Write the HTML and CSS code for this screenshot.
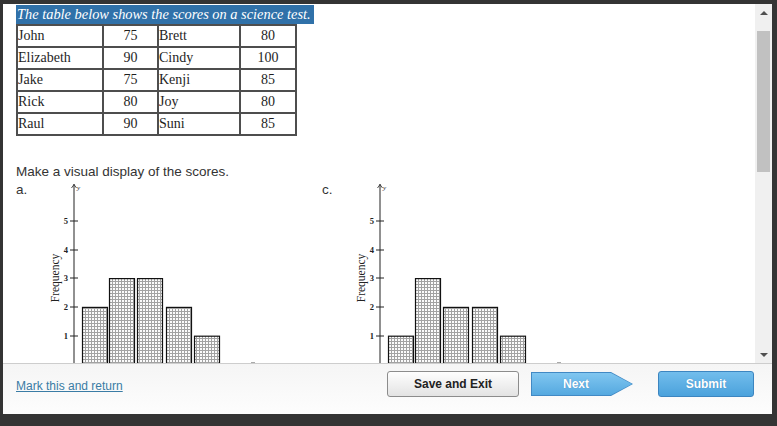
FILE: index.html
```html
<!DOCTYPE html>
<html>
<head>
<meta charset="utf-8">
<link rel="stylesheet" href="styles.css">
</head>
<body>
<div class="frame">
  <div class="main">
    <div class="content">
      <div class="caption">The table below shows the scores on a science test.</div>
      <table class="scores">
        <tr><td class="name">John</td><td class="num">75</td><td class="name">Brett</td><td class="num">80</td></tr>
        <tr><td class="name">Elizabeth</td><td class="num">90</td><td class="name">Cindy</td><td class="num">100</td></tr>
        <tr><td class="name">Jake</td><td class="num">75</td><td class="name">Kenji</td><td class="num">85</td></tr>
        <tr><td class="name">Rick</td><td class="num">80</td><td class="name">Joy</td><td class="num">80</td></tr>
        <tr><td class="name">Raul</td><td class="num">90</td><td class="name">Suni</td><td class="num">85</td></tr>
      </table>
      <p class="question">Make a visual display of the scores.</p>
      <div class="options">
        <div class="option">
          <span class="opt-label">a.</span>
          <svg class="chart" width="240" height="190" viewBox="0 0 240 190">
            <defs>
              <pattern id="gridA" width="3" height="3" patternUnits="userSpaceOnUse">
                <rect width="3" height="3" fill="#fbfbfb"/>
                <rect width="3" height="1" fill="#a2a2a2"/>
                <rect width="1" height="3" fill="#a2a2a2"/>
              </pattern>
            </defs>
            <line x1="34" y1="2" x2="34" y2="190" stroke="#222" stroke-width="1"/>
            <polyline points="31.5,6 34,2.5 36.5,6" fill="none" stroke="#222" stroke-width="0.8"/>
            <text x="37" y="8" class="ylab">y</text>
            <g stroke="#222" stroke-width="1">
              <line x1="30" y1="39" x2="38" y2="39"/>
              <line x1="30" y1="68" x2="38" y2="68"/>
              <line x1="30" y1="96" x2="38" y2="96"/>
              <line x1="30" y1="125" x2="38" y2="125"/>
              <line x1="30" y1="154" x2="38" y2="154"/>
            </g>
            <g class="tick">
              <text x="28" y="42">5</text>
              <text x="28" y="71">4</text>
              <text x="28" y="99">3</text>
              <text x="28" y="128">2</text>
              <text x="28" y="157">1</text>
            </g>
            <text class="freq" x="19" y="96" transform="rotate(-90 19 96)">Frequency</text>
            <g fill="url(#gridA)" stroke="#111" stroke-width="1.2">
              <rect x="42.5" y="125.4" width="25" height="70"/>
              <rect x="69.5" y="96.6" width="25" height="100"/>
              <rect x="97.5" y="96.6" width="25" height="100"/>
              <rect x="126.5" y="125.4" width="25" height="70"/>
              <rect x="154.5" y="154.2" width="25" height="40"/>
            </g>
            <line x1="211" y1="180.5" x2="215" y2="180.5" stroke="#aaa" stroke-width="1"/>
          </svg>
        </div>
        <div class="option">
          <span class="opt-label">c.</span>
          <svg class="chart" width="240" height="190" viewBox="0 0 240 190">
            <line x1="34" y1="2" x2="34" y2="190" stroke="#222" stroke-width="1"/>
            <polyline points="31.5,6 34,2.5 36.5,6" fill="none" stroke="#222" stroke-width="0.8"/>
            <text x="37" y="8" class="ylab">y</text>
            <g stroke="#222" stroke-width="1">
              <line x1="30" y1="39" x2="38" y2="39"/>
              <line x1="30" y1="68" x2="38" y2="68"/>
              <line x1="30" y1="96" x2="38" y2="96"/>
              <line x1="30" y1="125" x2="38" y2="125"/>
              <line x1="30" y1="154" x2="38" y2="154"/>
            </g>
            <g class="tick">
              <text x="28" y="42">5</text>
              <text x="28" y="71">4</text>
              <text x="28" y="99">3</text>
              <text x="28" y="128">2</text>
              <text x="28" y="157">1</text>
            </g>
            <text class="freq" x="19" y="96" transform="rotate(-90 19 96)">Frequency</text>
            <g fill="url(#gridA)" stroke="#111" stroke-width="1.2">
              <rect x="42.5" y="154.2" width="25" height="40"/>
              <rect x="69.5" y="96.6" width="25" height="100"/>
              <rect x="97.5" y="125.4" width="25" height="70"/>
              <rect x="126.5" y="125.4" width="25" height="70"/>
              <rect x="154.5" y="154.2" width="25" height="40"/>
            </g>
            <line x1="211" y1="180.5" x2="215" y2="180.5" stroke="#aaa" stroke-width="1"/>
          </svg>
        </div>
      </div>
    </div>
    <div class="scrollbar">
      <div class="sb-btn"><span class="arrow-up"></span></div>
      <div class="thumb"></div>
      <div class="sb-fill"></div>
      <div class="sb-btn"><span class="arrow-down"></span></div>
    </div>
  </div>
  <div class="footer">
    <a class="mark" href="#">Mark this and return</a>
    <div class="actions">
      <button class="btn save">Save and Exit</button>
      <div class="next"><div class="next-inner">Next</div></div>
      <button class="btn submit">Submit</button>
    </div>
  </div>
</div>
</body>
</html>
```
FILE: styles.css
```css
html, body {
  margin: 0;
  padding: 0;
}
body {
  background: #343434;
  font-family: "Liberation Sans", Arial, sans-serif;
  width: 777px;
  height: 426px;
  overflow: hidden;
}
.frame {
  margin: 4px 0 0 3px;
  width: 769px;
  height: 410px;
  background: #fff;
  display: flex;
  flex-direction: column;
}
.main {
  display: flex;
  height: 359px;
}
.content {
  flex: 1;
  overflow: hidden;
  padding: 1px 0 0 13px;
}
.caption {
  width: max-content;
  background: #3071a9;
  color: #fff;
  font-family: "Liberation Serif", "Times New Roman", serif;
  font-style: italic;
  font-size: 14.4px;
  line-height: 19px;
  height: 19px;
  padding: 0 3px 0 1px;
}
.scores {
  border-collapse: collapse;
  font-family: "Liberation Serif", "Times New Roman", serif;
  font-size: 14px;
  color: #1e1e1e;
}
.scores td {
  border: 2px solid #4e4e4e;
  height: 20px;
  padding: 0;
  line-height: 18px;
}
.scores td.name {
  text-align: left;
  padding-left: 0;
}
.scores tr td:nth-child(1) { width: 84px; }
.scores tr td:nth-child(2) { width: 53px; }
.scores tr td:nth-child(3) { width: 80px; }
.scores tr td:nth-child(4) { width: 54px; }
.scores td.num {
  text-align: center;
}
.question {
  margin: 28px 0 0 0;
  font-size: 13.5px;
  line-height: 16px;
  color: #333;
}
.options {
  display: flex;
  margin-top: 2px;
}
.option {
  display: flex;
  align-items: flex-start;
  width: 306px;
}
.opt-label {
  width: 24px;
  font-size: 13.5px;
  line-height: 16px;
  color: #333;
}
.chart {
  display: block;
}
.chart .ylab {
  font-family: "Liberation Serif", serif;
  font-style: italic;
  font-size: 7px;
  fill: #222;
}
.chart .tick text {
  font-family: "Liberation Serif", serif;
  font-weight: bold;
  font-size: 8.5px;
  text-anchor: end;
  fill: #222;
}
.chart .freq {
  font-family: "Liberation Serif", serif;
  font-size: 11.5px;
  text-anchor: middle;
  fill: #222;
}
.scrollbar {
  width: 17px;
  background: #f0f0f0;
  display: flex;
  flex-direction: column;
  align-items: center;
}
.sb-btn {
  width: 17px;
  height: 17px;
  display: flex;
  align-items: center;
  justify-content: center;
}
.arrow-up {
  width: 0;
  height: 0;
  border-left: 4px solid transparent;
  border-right: 4px solid transparent;
  border-bottom: 4px solid #505050;
}
.arrow-down {
  width: 0;
  height: 0;
  border-left: 4px solid transparent;
  border-right: 4px solid transparent;
  border-top: 4px solid #505050;
}
.thumb {
  width: 13px;
  height: 141px;
  margin-top: 10px;
  background: #c1c1c1;
}
.sb-fill {
  flex: 1;
}
.footer {
  height: 40px;
  border-top: 1px solid #cdcdcd;
  background: linear-gradient(#f5f5f5, #fdfdfd);
  display: flex;
  align-items: center;
  justify-content: space-between;
  padding: 0 18px 10px 13px;
}
.mark {
  color: #3a7ca5;
  font-size: 12px;
  text-decoration: underline;
  margin-top: 4px;
}
.actions {
  display: flex;
  align-items: center;
}
.btn {
  box-sizing: border-box;
  height: 26px;
  border-radius: 3px;
  font-family: "Liberation Sans", Arial, sans-serif;
  font-weight: bold;
  font-size: 12px;
  padding: 0;
}
.save {
  width: 132px;
  margin-right: 12px;
  border: 1px solid #8c8c8c;
  background: linear-gradient(#fefefe, #e3e3e3);
  color: #222;
}
.next {
  width: 102px;
  height: 24px;
  box-sizing: border-box;
  padding: 1px;
  margin-right: 25px;
  background: #4189c4;
  clip-path: polygon(0 0, 80px 0, 102px 12px, 80px 24px, 0 24px);
}
.next-inner {
  width: 100px;
  height: 22px;
  background: linear-gradient(#80c6f0, #55a9e0);
  clip-path: polygon(0 0, 79px 0, 100px 11px, 79px 22px, 0 22px);
  color: #fff;
  font-weight: bold;
  font-size: 12px;
  line-height: 22px;
  padding-right: 12px;
  box-sizing: border-box;
  text-align: center;
  text-shadow: 0 0 1px rgba(40, 100, 160, 0.6);
}
.submit {
  width: 96px;
  border: 1px solid #3c85c0;
  background: linear-gradient(#72bdec, #4ba2dc);
  color: #fff;
  text-shadow: 0 0 1px rgba(40, 100, 160, 0.6);
}
```
